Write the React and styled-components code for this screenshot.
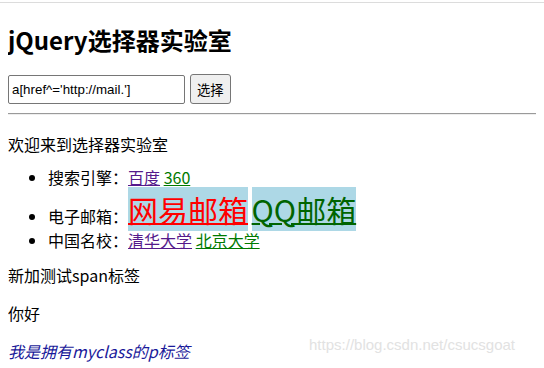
import React from "react";
import styled, { createGlobalStyle } from "styled-components";

const GlobalStyle = createGlobalStyle`
  html {
    border-top: 1px solid #dcdcdc;
    margin-top: 2px;
  }
  body {
    margin: 8px;
    font-family: "Noto Sans CJK SC", "Microsoft YaHei", sans-serif;
    font-size: 16px;
    line-height: 21px;
    color: #000;
    background: #fff;
  }
`;

const Page = styled.div`
  position: relative;
`;

const Title = styled.h1`
  font-size: 24px;
  line-height: 32px;
  font-weight: bold;
  margin: 13px 0 18px;
`;

const Form = styled.div`
  display: flex;
  align-items: center;
  gap: 5px;
  height: 30px;
`;

const Input = styled.input`
  box-sizing: border-box;
  width: 177px;
  height: 29px;
  padding: 1px 3px;
  border: 1px solid #767676;
  border-radius: 2px;
  font-family: "Liberation Sans", Arial, sans-serif;
  font-size: 13.33px;
  color: #000;
`;

const Button = styled.button`
  box-sizing: border-box;
  height: 30px;
  padding: 1px 6px;
  border: 1px solid #767676;
  border-radius: 3px;
  background: #efefef;
  font-family: "Noto Sans CJK SC", sans-serif;
  font-size: 13.33px;
  color: #000;
`;

const Rule = styled.hr`
  margin: 9px -8px 0 0;
  border: none;
  border-top: 1px solid #9a9a9a;
  border-bottom: 1px solid #eee;
`;

const Intro = styled.p`
  margin: 19px 0 12px;
`;

const Para = styled.p`
  margin: 14px 0 17px;
  font-style: ${(p) => (p.italic ? "italic" : "normal")};
  color: ${(p) => p.color || "#000"};
`;

const List = styled.ul`
  margin: 12px 0 14px;
  padding-left: 40px;
`;

const Item = styled.li`
  line-height: 21px;
`;

const Link = styled.a`
  color: ${(p) => (p.visited ? "#551a8b" : "#007a00")};
  text-decoration: underline;
`;

const MailLink = styled.a`
  font-size: 30px;
  line-height: 42px;
  vertical-align: 1px;
  background: #add8e6;
  color: ${(p) => p.color};
  text-decoration: underline;
  text-decoration-thickness: 2px;
`;

const Watermark = styled.span`
  position: absolute;
  right: 21px;
  bottom: 7px;
  font-family: "Liberation Sans", Arial, sans-serif;
  font-size: 15px;
  color: #e2e2e2;
`;

export default function App() {
  return (
    <Page>
      <GlobalStyle />
      <Title>jQuery选择器实验室</Title>
      <Form>
        <Input type="text" defaultValue="a[href^='http://mail.']" />
        <Button type="button">选择</Button>
      </Form>
      <Rule />
      <Intro>欢迎来到选择器实验室</Intro>
      <List>
        <Item>
          搜索引擎：<Link visited href="#baidu">百度</Link>{" "}
          <Link href="#360">360</Link>
        </Item>
        <Item>
          电子邮箱：<MailLink color="#ff0000" href="#163">网易邮箱</MailLink>{" "}
          <MailLink color="#006400" href="#qq">QQ邮箱</MailLink>
        </Item>
        <Item>
          中国名校：<Link visited href="#tsinghua">清华大学</Link>{" "}
          <Link href="#pku">北京大学</Link>
        </Item>
      </List>
      <Para>新加测试span标签</Para>
      <Para>你好</Para>
      <Para italic color="#1a1a9a">我是拥有myclass的p标签</Para>
      <Watermark>https://blog.csdn.net/csucsgoat</Watermark>
    </Page>
  );
}
